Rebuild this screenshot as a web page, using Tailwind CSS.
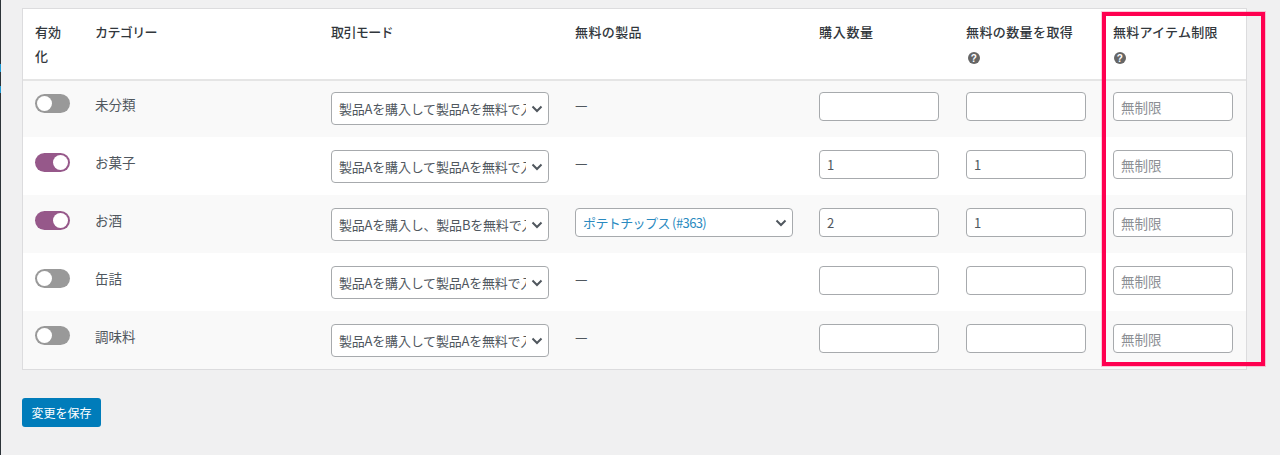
<!DOCTYPE html>
<html lang="ja">
  <head>
    <meta charset="UTF-8" />
    <meta name="viewport" content="width=device-width, initial-scale=1.0" />
    <title>カテゴリー設定</title>
    <script src="https://cdn.jsdelivr.net/npm/@tailwindcss/browser@4"></script>
  </head>
  <body class="h-[455px] overflow-hidden bg-[#f0f0f1] text-[13.5px] leading-6 text-[#50575e] font-['Noto_Sans_CJK_JP','Noto_Sans',sans-serif]">
    <div class="relative flex h-[455px]">
      <!-- edge of the admin menu -->
      <div class="flex w-px shrink-0 flex-col bg-[#2c3338]">
        <div class="mt-[64px] h-2 bg-[#1e9ad6]"></div>
        <div class="mt-[14px] h-[7px] bg-[#1e9ad6]"></div>
      </div>

      <main class="ml-[21px] w-[1225px] pt-2">
        <table class="w-full table-fixed border-separate border-spacing-0 border border-[#dcdcde] bg-white">
          <colgroup>
            <col class="w-[60px]" />
            <col class="w-[236px]" />
            <col class="w-[244px]" />
            <col class="w-[244px]" />
            <col class="w-[147px]" />
            <col class="w-[147px]" />
            <col />
          </colgroup>
          <thead>
            <tr class="h-[72px] text-left align-top text-[13px] text-[#32373c]">
              <th class="border-b-2 border-[#e5e5e5] px-3 pt-[11px] font-medium">有効化</th>
              <th class="border-b-2 border-[#e5e5e5] px-3 pt-[11px] font-medium tracking-[-0.6px]">カテゴリー</th>
              <th class="border-b-2 border-[#e5e5e5] px-3 pt-[11px] font-medium tracking-[-0.6px]">取引モード</th>
              <th class="border-b-2 border-[#e5e5e5] px-3 pt-[11px] font-medium tracking-[0.4px]">無料の製品</th>
              <th class="border-b-2 border-[#e5e5e5] px-3 pt-[11px] font-medium tracking-[0.7px]">購入数量</th>
              <th class="border-b-2 border-[#e5e5e5] px-3 pt-[11px] font-medium tracking-[0.4px]">
                無料の数量を取得
                <svg class="mt-[8px] ml-[2px] block" width="12" height="12" viewBox="0 0 12 12"><circle cx="6" cy="6" r="6" fill="#666" /><text x="6" y="9.5" text-anchor="middle" font-size="10" font-weight="700" fill="#fff" font-family="Liberation Sans">?</text></svg>
              </th>
              <th class="border-b-2 border-[#e5e5e5] px-3 pt-[11px] font-medium tracking-[0.25px]">
                無料アイテム制限
                <svg class="mt-[8px] ml-px block" width="12" height="12" viewBox="0 0 12 12"><circle cx="6" cy="6" r="6" fill="#666" /><text x="6" y="9.5" text-anchor="middle" font-size="10" font-weight="700" fill="#fff" font-family="Liberation Sans">?</text></svg>
              </th>
            </tr>
          </thead>
          <tbody class="align-top">
            <tr class="h-[56px] bg-[#f9f9f9]">
              <td class="px-3 pt-[11px]">
                <div class="mt-[2px] flex h-[19px] w-[35px] items-center justify-start rounded-full bg-[#999] p-[2px]"><span class="size-[15px] rounded-full bg-white"></span></div>
              </td>
              <td class="px-3 pt-[11px]">未分類</td>
              <td class="px-3 pt-[11px]">
                <div class="relative h-[33px] w-[218px]">
                  <select class="h-full w-full appearance-none rounded-[4px] border border-[#a7aaad] bg-white pr-[22px] pl-[7px] text-[13px] tracking-[-0.2px]"><option>製品Aを購入して製品Aを無料で入手</option></select>
                  <svg class="absolute top-[13px] right-[6px]" width="12" height="9" viewBox="0 0 12 9" fill="none" stroke="#50575e" stroke-width="2"><path d="M1.5 1.5 6 6l4.5-4.5" /></svg>
                </div>
              </td>
              <td class="px-3 pt-[11px] text-[14px]">—</td>
              <td class="px-3 pt-[11px]"><input class="h-[29px] w-[120px] rounded-[4px] border border-[#a7aaad] bg-white px-[7px] text-[13px]" /></td>
              <td class="px-3 pt-[11px]"><input class="h-[29px] w-[120px] rounded-[4px] border border-[#a7aaad] bg-white px-[7px] text-[13px]" /></td>
              <td class="px-3 pt-[11px]"><input placeholder="無制限" class="h-[29px] w-[120px] rounded-[4px] border border-[#a7aaad] bg-white px-[7px] text-[13.5px] placeholder:text-[#8c8f94]" /></td>
            </tr>
            <tr class="h-[58px] bg-white">
              <td class="px-3 pt-[13px]">
                <div class="mt-[3px] flex h-[19px] w-[35px] items-center justify-end rounded-full bg-[#96588a] p-[2px]"><span class="size-[15px] rounded-full bg-white"></span></div>
              </td>
              <td class="px-3 pt-[13px]">お菓子</td>
              <td class="px-3 pt-[13px]">
                <div class="relative h-[33px] w-[218px]">
                  <select class="h-full w-full appearance-none rounded-[4px] border border-[#a7aaad] bg-white pr-[22px] pl-[7px] text-[13px] tracking-[-0.2px]"><option>製品Aを購入して製品Aを無料で入手</option></select>
                  <svg class="absolute top-[13px] right-[6px]" width="12" height="9" viewBox="0 0 12 9" fill="none" stroke="#50575e" stroke-width="2"><path d="M1.5 1.5 6 6l4.5-4.5" /></svg>
                </div>
              </td>
              <td class="px-3 pt-[13px] text-[14px]">—</td>
              <td class="px-3 pt-[13px]"><input value="1" class="h-[29px] w-[120px] rounded-[4px] border border-[#a7aaad] bg-white px-[7px] text-[13px]" /></td>
              <td class="px-3 pt-[13px]"><input value="1" class="h-[29px] w-[120px] rounded-[4px] border border-[#a7aaad] bg-white px-[7px] text-[13px]" /></td>
              <td class="px-3 pt-[13px]"><input placeholder="無制限" class="h-[29px] w-[120px] rounded-[4px] border border-[#a7aaad] bg-white px-[7px] text-[13.5px] placeholder:text-[#8c8f94]" /></td>
            </tr>
            <tr class="h-[58px] bg-[#f9f9f9]">
              <td class="px-3 pt-[13px]">
                <div class="mt-[3px] flex h-[19px] w-[35px] items-center justify-end rounded-full bg-[#96588a] p-[2px]"><span class="size-[15px] rounded-full bg-white"></span></div>
              </td>
              <td class="px-3 pt-[13px]">お酒</td>
              <td class="px-3 pt-[13px]">
                <div class="relative h-[33px] w-[218px]">
                  <select class="h-full w-full appearance-none rounded-[4px] border border-[#a7aaad] bg-white pr-[22px] pl-[7px] text-[13px] tracking-[-0.2px]"><option>製品Aを購入し、製品Bを無料で入手</option></select>
                  <svg class="absolute top-[13px] right-[6px]" width="12" height="9" viewBox="0 0 12 9" fill="none" stroke="#50575e" stroke-width="2"><path d="M1.5 1.5 6 6l4.5-4.5" /></svg>
                </div>
              </td>
              <td class="px-3 pt-[13px]">
                <div class="relative h-[29px] w-[218px]">
                  <select class="h-full w-full appearance-none rounded-[4px] border border-[#a7aaad] bg-white pr-6 pl-[7px] text-[13px] tracking-[-0.6px] text-[#2a8ac0]"><option>ポテトチップス (#363)</option></select>
                  <svg class="absolute top-[11px] right-[6px]" width="12" height="9" viewBox="0 0 12 9" fill="none" stroke="#50575e" stroke-width="2"><path d="M1.5 1.5 6 6l4.5-4.5" /></svg>
                </div>
              </td>
              <td class="px-3 pt-[13px]"><input value="2" class="h-[29px] w-[120px] rounded-[4px] border border-[#a7aaad] bg-white px-[7px] text-[13px]" /></td>
              <td class="px-3 pt-[13px]"><input value="1" class="h-[29px] w-[120px] rounded-[4px] border border-[#a7aaad] bg-white px-[7px] text-[13px]" /></td>
              <td class="px-3 pt-[13px]"><input placeholder="無制限" class="h-[29px] w-[120px] rounded-[4px] border border-[#a7aaad] bg-white px-[7px] text-[13.5px] placeholder:text-[#8c8f94]" /></td>
            </tr>
            <tr class="h-[58px] bg-white">
              <td class="px-3 pt-[13px]">
                <div class="mt-[3px] flex h-[19px] w-[35px] items-center justify-start rounded-full bg-[#999] p-[2px]"><span class="size-[15px] rounded-full bg-white"></span></div>
              </td>
              <td class="px-3 pt-[13px]">缶詰</td>
              <td class="px-3 pt-[13px]">
                <div class="relative h-[33px] w-[218px]">
                  <select class="h-full w-full appearance-none rounded-[4px] border border-[#a7aaad] bg-white pr-[22px] pl-[7px] text-[13px] tracking-[-0.2px]"><option>製品Aを購入して製品Aを無料で入手</option></select>
                  <svg class="absolute top-[13px] right-[6px]" width="12" height="9" viewBox="0 0 12 9" fill="none" stroke="#50575e" stroke-width="2"><path d="M1.5 1.5 6 6l4.5-4.5" /></svg>
                </div>
              </td>
              <td class="px-3 pt-[13px] text-[14px]">—</td>
              <td class="px-3 pt-[13px]"><input class="h-[29px] w-[120px] rounded-[4px] border border-[#a7aaad] bg-white px-[7px] text-[13px]" /></td>
              <td class="px-3 pt-[13px]"><input class="h-[29px] w-[120px] rounded-[4px] border border-[#a7aaad] bg-white px-[7px] text-[13px]" /></td>
              <td class="px-3 pt-[13px]"><input placeholder="無制限" class="h-[29px] w-[120px] rounded-[4px] border border-[#a7aaad] bg-white px-[7px] text-[13.5px] placeholder:text-[#8c8f94]" /></td>
            </tr>
            <tr class="h-[58px] bg-[#f9f9f9]">
              <td class="px-3 pt-[13px]">
                <div class="mt-[2px] flex h-[19px] w-[35px] items-center justify-start rounded-full bg-[#999] p-[2px]"><span class="size-[15px] rounded-full bg-white"></span></div>
              </td>
              <td class="px-3 pt-[13px]">調味料</td>
              <td class="px-3 pt-[13px]">
                <div class="relative h-[33px] w-[218px]">
                  <select class="h-full w-full appearance-none rounded-[4px] border border-[#a7aaad] bg-white pr-[22px] pl-[7px] text-[13px] tracking-[-0.2px]"><option>製品Aを購入して製品Aを無料で入手</option></select>
                  <svg class="absolute top-[13px] right-[6px]" width="12" height="9" viewBox="0 0 12 9" fill="none" stroke="#50575e" stroke-width="2"><path d="M1.5 1.5 6 6l4.5-4.5" /></svg>
                </div>
              </td>
              <td class="px-3 pt-[13px] text-[14px]">—</td>
              <td class="px-3 pt-[13px]"><input class="h-[29px] w-[120px] rounded-[4px] border border-[#a7aaad] bg-white px-[7px] text-[13px]" /></td>
              <td class="px-3 pt-[13px]"><input class="h-[29px] w-[120px] rounded-[4px] border border-[#a7aaad] bg-white px-[7px] text-[13px]" /></td>
              <td class="px-3 pt-[13px]"><input placeholder="無制限" class="h-[29px] w-[120px] rounded-[4px] border border-[#a7aaad] bg-white px-[7px] text-[13.5px] placeholder:text-[#8c8f94]" /></td>
            </tr>
          </tbody>
        </table>

        <button class="mt-[28px] flex h-[29px] w-[79px] items-center justify-center rounded-[3px] bg-[#007cba] text-[12px] text-white">変更を保存</button>
      </main>

      <!-- red highlight drawn over the last column -->
      <div class="pointer-events-none absolute top-[12px] left-[1102px] h-[354px] w-[163px] border-4 border-[#ff0050] shadow-[0_0_0_1px_#ff005033]"></div>
    </div>
  </body>
</html>
